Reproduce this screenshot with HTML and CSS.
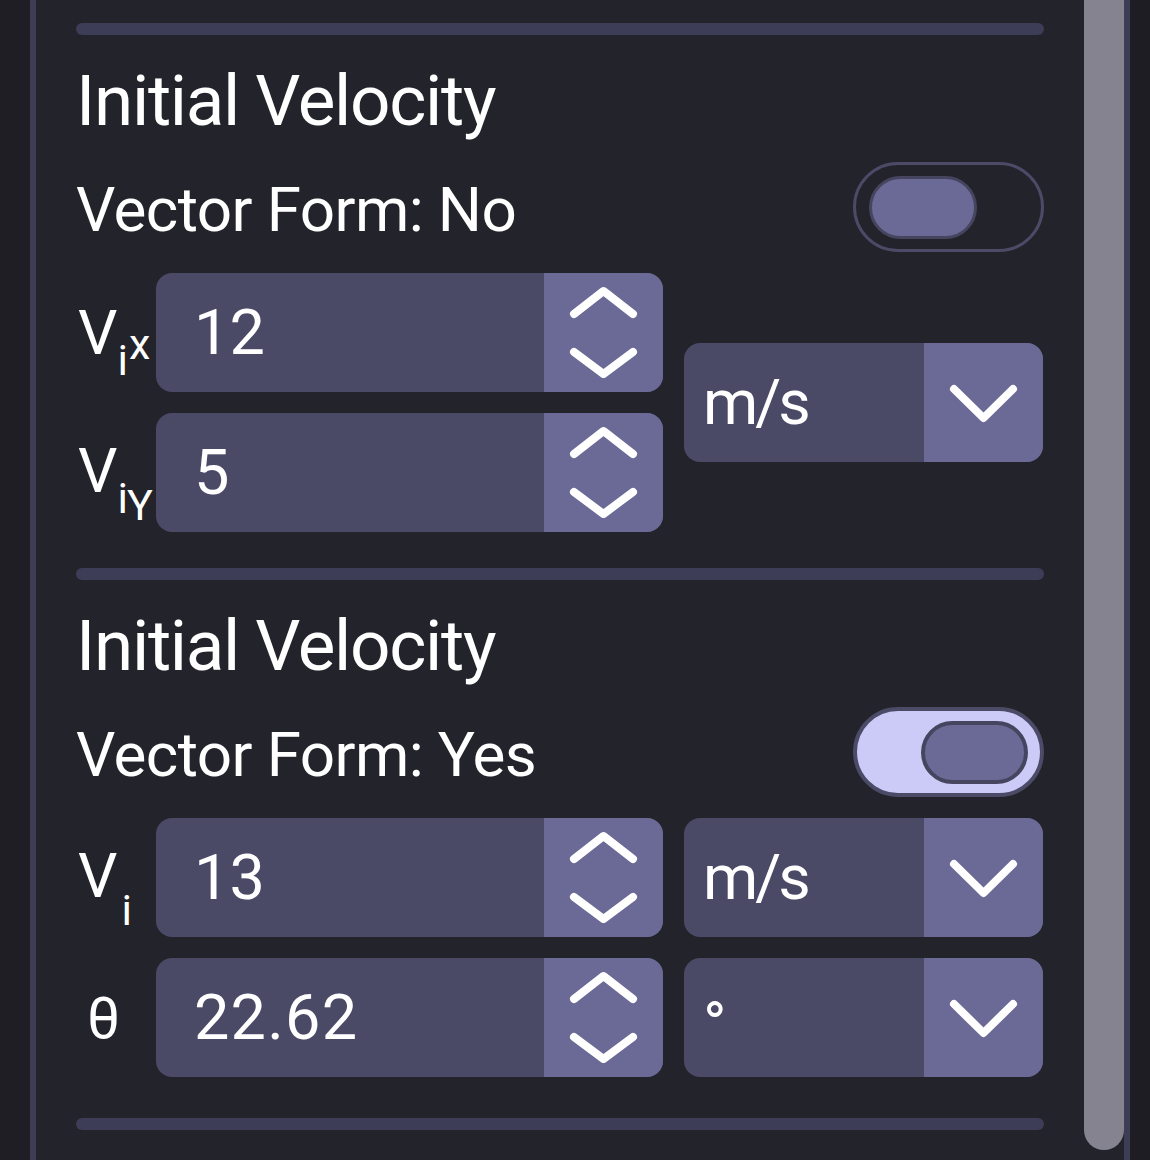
FILE: index.html
```html
<!DOCTYPE html>
<html lang="en">
<head>
<meta charset="utf-8">
<title>Initial Velocity</title>
<link rel="stylesheet" href="styles.css">
</head>
<body>
<div class="app">
  <div class="gutter"></div>
  <main class="panel">
    <div class="content">
      <div class="divider"></div>

      <section class="section">
        <h2 class="title">Initial Velocity</h2>
        <div class="toggle-row">
          <span class="toggle-label">Vector Form: No</span>
          <div class="toggle"><div class="knob"></div></div>
        </div>
        <div class="fields-split">
          <div class="inputs">
            <div class="field-row">
              <div class="label">V<sub class="sub">i</sub><sub class="sub sub-high">x</sub></div>
              <div class="number">
                <span class="value">12</span>
                <div class="spinner">
                  <svg viewBox="0 0 119 119" width="119" height="119"><path d="M30 41 L59.5 18 L89 41 M30 79 L59.5 101 L89 79"/></svg>
                </div>
              </div>
            </div>
            <div class="field-row">
              <div class="label">V<sub class="sub">i</sub><sub class="sub sub-low">Y</sub></div>
              <div class="number">
                <span class="value">5</span>
                <div class="spinner">
                  <svg viewBox="0 0 119 119" width="119" height="119"><path d="M30 41 L59.5 18 L89 41 M30 79 L59.5 101 L89 79"/></svg>
                </div>
              </div>
            </div>
          </div>
          <div class="select">
            <span class="select-text">m/s</span>
            <div class="select-arrow">
              <svg viewBox="0 0 119 119" width="119" height="119"><path d="M30 46 L59.5 75 L89 46"/></svg>
            </div>
          </div>
        </div>
      </section>

      <div class="divider"></div>

      <section class="section section-last">
        <h2 class="title">Initial Velocity</h2>
        <div class="toggle-row">
          <span class="toggle-label">Vector Form: Yes</span>
          <div class="toggle toggle-on"><div class="knob"></div></div>
        </div>
        <div class="fields-grid">
          <div class="field-row">
            <div class="label">V<sub class="sub sub-deep">i</sub></div>
            <div class="number">
              <span class="value">13</span>
              <div class="spinner">
                <svg viewBox="0 0 119 119" width="119" height="119"><path d="M30 41 L59.5 18 L89 41 M30 79 L59.5 101 L89 79"/></svg>
              </div>
            </div>
          </div>
          <div class="select">
            <span class="select-text">m/s</span>
            <div class="select-arrow">
              <svg viewBox="0 0 119 119" width="119" height="119"><path d="M30 46 L59.5 75 L89 46"/></svg>
            </div>
          </div>
          <div class="field-row">
            <div class="label label-theta">θ</div>
            <div class="number">
              <span class="value value-wide">22.62</span>
              <div class="spinner">
                <svg viewBox="0 0 119 119" width="119" height="119"><path d="M30 41 L59.5 18 L89 41 M30 79 L59.5 101 L89 79"/></svg>
              </div>
            </div>
          </div>
          <div class="select">
            <span class="select-text select-degree">°</span>
            <div class="select-arrow">
              <svg viewBox="0 0 119 119" width="119" height="119"><path d="M30 46 L59.5 75 L89 46"/></svg>
            </div>
          </div>
        </div>
      </section>

      <div class="divider"></div>
    </div>
    <div class="scrollbar"><div class="thumb"></div></div>
  </main>
  <div class="gutter-right"></div>
</div>
</body>
</html>
```

FILE: styles.css
```css
* { box-sizing: border-box; }

html, body {
  margin: 0;
  padding: 0;
  height: 1160px;
  overflow: hidden;
  background: #1e1e24;
}

body {
  font-family: Roboto, "Liberation Sans", sans-serif;
  color: #ffffff;
}

.app {
  display: flex;
  height: 1160px;
}

.gutter {
  width: 30px;
  flex: none;
  background: #1e1e24;
}

.gutter-right {
  width: 20px;
  flex: none;
  background: #1d1d23;
}

.panel {
  flex: 1;
  display: flex;
  background: #23232b;
  border-left: 6px solid #3e3d56;
  border-right: 6px solid #3e3d56;
  overflow: hidden;
}

.content {
  width: 968px;
  margin-left: 40px;
  padding-top: 23px;
  display: flex;
  flex-direction: column;
}

.divider {
  height: 12px;
  border-radius: 6px;
  background: #3e3d57;
  flex: none;
}

.section {
  display: flex;
  flex-direction: column;
  padding-top: 30px;
  padding-bottom: 36px;
}

.section-last {
  padding-bottom: 41px;
}

.title {
  margin: 0;
  font-size: 71px;
  font-weight: 400;
  line-height: 71px;
  letter-spacing: -1.3px;
}

.toggle-row {
  margin-top: 26px;
  height: 90px;
  display: flex;
  align-items: center;
  justify-content: space-between;
}

.toggle-label {
  font-size: 62px;
  line-height: 62px;
  letter-spacing: -0.6px;
  padding-top: 6px;
}

.toggle {
  width: 191px;
  height: 90px;
  border: 3px solid #4b4a67;
  border-radius: 45px;
  display: flex;
  align-items: center;
  padding: 0 13px;
}

.toggle-on {
  background: #cccbf7;
  border-width: 4px;
  justify-content: flex-end;
  padding: 0 12px;
}

.knob {
  width: 108px;
  height: 63px;
  border-radius: 32px;
  background: #6b6a96;
  border: 3px solid #46455f;
}

.toggle-on .knob {
  width: 107px;
  border-width: 4px;
}

.fields-split {
  margin-top: 21px;
  display: flex;
  align-items: center;
  gap: 21px;
}

.inputs {
  display: flex;
  flex-direction: column;
  gap: 21px;
  width: 587px;
}

.fields-grid {
  margin-top: 21px;
  display: grid;
  grid-template-columns: 587px 359px;
  column-gap: 21px;
  row-gap: 21px;
}

.field-row {
  display: flex;
  align-items: center;
  height: 119px;
}

.label {
  width: 80px;
  flex: none;
  font-size: 62px;
  line-height: 62px;
  padding-left: 2px;
  white-space: nowrap;
}

.label-theta {
  padding-left: 11px;
  font-size: 58px;
}

.sub {
  font-size: 43px;
  line-height: 0;
  vertical-align: -21px;
}

.sub-high {
  vertical-align: -5px;
  margin-left: 1px;
}

.sub-low {
  vertical-align: -28px;
  margin-left: -1px;
}

.sub-deep {
  vertical-align: -28px;
  margin-left: 4px;
}

.number,
.select {
  display: flex;
  height: 119px;
  border-radius: 16px;
  overflow: hidden;
  background: #4a4966;
}

.number {
  width: 507px;
}

.select {
  width: 359px;
}

.value {
  flex: 1;
  font-size: 63px;
  line-height: 119px;
  padding-left: 38px;
}

.value-wide {
  letter-spacing: 1.2px;
}

.select-text {
  flex: 1;
  font-size: 63px;
  line-height: 119px;
  padding-left: 19px;
  letter-spacing: -3px;
}

.select-degree {
  padding-top: 8px;
  letter-spacing: 0;
}

.spinner,
.select-arrow {
  width: 119px;
  flex: none;
  background: #6b6a96;
}

.spinner svg,
.select-arrow svg {
  display: block;
}

.spinner path,
.select-arrow path {
  fill: none;
  stroke: #ffffff;
  stroke-width: 8;
  stroke-linecap: round;
  stroke-linejoin: round;
}

.scrollbar {
  width: 40px;
  margin-left: 40px;
  flex: none;
  display: flex;
  flex-direction: column;
}

.thumb {
  flex: 1;
  margin-top: -30px;
  margin-bottom: 10px;
  border-radius: 20px;
  background: #858390;
}
```
